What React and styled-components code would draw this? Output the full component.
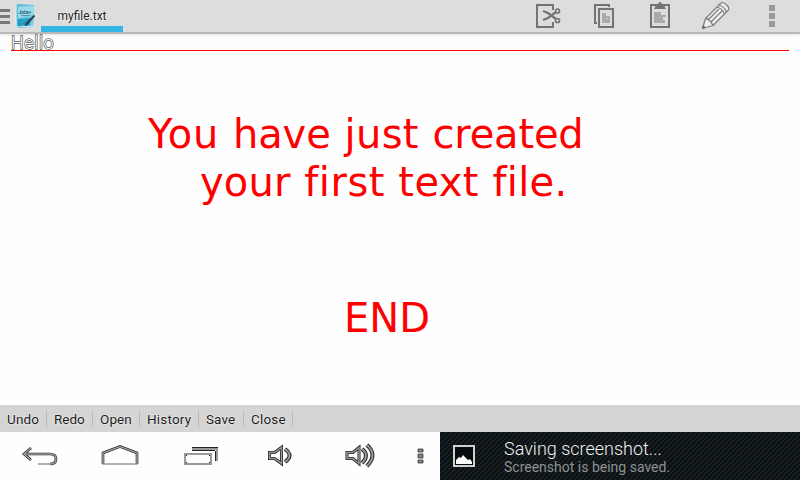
import React from "react";
import styled, { createGlobalStyle } from "styled-components";

const Global = createGlobalStyle`
  * { box-sizing: border-box; }
  body { margin: 0; background: #fefefe; overflow: hidden; }
`;

const Screen = styled.div`
  width: 800px;
  height: 480px;
  display: flex;
  flex-direction: column;
  background: #fefefe;
  font-family: Roboto, sans-serif;
`;

const ActionBar = styled.header`
  flex: none;
  height: 34px;
  display: flex;
  background: #dddddd;
  border-bottom: 2px solid #b9b9b9;
  box-shadow: 0 1px 2px #e4e4e4;
`;

const Icon = styled.svg`
  display: block;
  flex: none;
  width: ${(p) => p.$w}px;
  height: ${(p) => p.$h}px;
  margin-left: ${(p) => p.$gap || 0}px;
`;

const Tab = styled.div`
  width: 82px;
  height: 32px;
  margin-left: 4px;
  border-bottom: 6px solid #33b5e5;
  text-align: center;
  font-size: 12px;
  line-height: 32px;
  white-space: nowrap;
`;

const Outlined = styled.span`
  display: inline-block;
  color: ${(p) => p.$fill};
  font-weight: ${(p) => p.$weight || 400};
  letter-spacing: ${(p) => p.$track || 0}px;
  -webkit-text-stroke: ${(p) => p.$stroke}px ${(p) => p.$line};
  paint-order: stroke fill;
`;

const Actions = styled.div`
  display: flex;
  margin-left: auto;
`;

const Editor = styled.main`
  flex: 1;
  padding: 0 11px;
`;

const FirstLine = styled.div`
  height: 17px;
  border-bottom: 1px solid #f00;
  font-size: 18px;
  line-height: 18px;
`;

const Message = styled.p`
  margin: ${(p) => p.$top}px 0 0 ${(p) => p.$left}px;
  font: 40px/48px "DejaVu Sans", sans-serif;
  color: #f00;
  white-space: nowrap;
`;

const Word = styled.span`
  letter-spacing: ${(p) => p.$track}px;
  margin-left: ${(p) => p.$gap || 0}px;
`;

const CommandBar = styled.nav`
  flex: none;
  height: 27px;
  display: flex;
  align-items: center;
  background: #d5d5d5;
`;

const Command = styled.div`
  width: ${(p) => p.$w}px;
  height: 16px;
  padding-left: 7px;
  border-right: 1px solid #b9b9b9;
  font-size: 13.5px;
  line-height: 16px;
  white-space: nowrap;
`;

const SystemBar = styled.footer`
  flex: none;
  height: 48px;
  display: flex;
`;

const Notification = styled.section`
  width: 360px;
  display: flex;
  background: #0e1012 linear-gradient(135deg, #0e1012 0 12.5%, #173039 12.5% 25%, #0e1012 25% 62.5%, #173039 62.5% 75%, #0e1012 75%) 0 0 / 5px 5px;
`;

const NoticeText = styled.div`
  margin-left: 28px;
  padding-top: 7px;
  white-space: nowrap;
`;

const NoticeTitle = styled.div`
  font-size: 18px;
  font-weight: 300;
  line-height: 20px;
  color: #f0f0f0;
`;

const NoticeDetail = styled.div`
  font-size: 14px;
  line-height: 17px;
  color: #8f9192;
`;

const commands = [
  ["Undo", 47, 0.15],
  ["Redo", 46, 0],
  ["Open", 47, 0.1],
  ["History", 59, 0.2],
  ["Save", 45, 0.1],
  ["Close", 49, 0.2],
];

function AppLogo() {
  return (
    <Icon $w={37} $h={32} viewBox="0 0 37 32">
      <path d="M0 10.500h10M0 16.500h10M0 22.500h10" stroke="#787878" strokeWidth="3" />
      <path d="M16 5l2-1 16 1-1 22-15 1-2-3z" fill="#5cbbd3" />
      <path d="M18 6l16-1-1 21-15 1z" fill="#75cbe1" />
      <path d="M18 7l16-1-.4 8L18 18z" fill="#9bdceb" />
      <path d="M18 19l12-1v8l-12 1z" fill="#2699c2" />
      <path d="M16 5v21M17 27l16-1" stroke="#e9f6f8" />
      <path d="M20 23l7-4M19 26l11-1" stroke="#41aece" />
      <path d="M35 16l-8 9-2 1 1-3 8-8" fill="#244256" stroke="#284c63" strokeWidth=".7" />
      <text x="18.5" y="13.5" fontFamily="Roboto" fontSize="5" fontWeight="bold" fill="#235e7c">Jota+</text>
      <path d="M21 15.500h9" stroke="#5299b0" />
    </Icon>
  );
}

function ActionIcons() {
  return (
    <Actions>
      <Icon $w={28} $h={32} viewBox="534 0 28 32" fill="none" stroke="#747474">
        <path d="M553 10V5h-16v22h16v-5" strokeWidth="2" />
        <path d="M543 11l5 2 8 6M543 20l5-2 8-6" strokeWidth="2.200" />
        <circle cx="557.5" cy="11" r="2" strokeWidth="1.700" />
        <circle cx="557.5" cy="20.5" r="2" strokeWidth="1.700" />
      </Icon>
      <Icon $w={24} $h={32} $gap={31} viewBox="593 0 24 32" fill="none" stroke="#747474" strokeWidth="2">
        <path d="M597 23h-2V5h14v2M599 9h14v18h-14z" />
        <path d="M602 13h4v3h4v7h-8z" fill="#aaa" stroke="none" />
        <path d="M606 18.500h2" stroke="#ccc" strokeWidth="1" />
      </Icon>
      <Icon $w={24} $h={32} $gap={31} viewBox="648 0 24 32" fill="none" stroke="#747474" strokeWidth="2">
        <path d="M651 5h18v22h-18z" />
        <path d="M654 9l2-4h2c0-4 4-4 4 0h2l2 4z" fill="#747474" stroke="none" />
        <path d="M654 12h7v3h5v2h-3v3h2v3h-11z" fill="#aaa" stroke="none" />
      </Icon>
      <Icon $w={30} $h={32} $gap={29} viewBox="701 0 30 32" fill="#eee" stroke="#808080" strokeWidth="1.300" strokeLinejoin="round">
        <path d="M702.500 28.500l3-10 15-15q2-2 5 .5 5 4 2.500 6.500l-15 15z" />
        <path d="M705.500 18.500q5 1 7.500 7M717 7q6 2 7.500 7M719 5q6 2 7.500 7M708 20l11-11M711 22l11-11" fill="none" />
        <path d="M702 29l1.200-4 2.500 2.500z" fill="#666" stroke="none" />
      </Icon>
      <Icon $w={10} $h={32} $gap={36} viewBox="767 0 10 32" fill="#999">
        <path d="M769 5h6v6h-6zM769 13h6v6h-6zM769 21h6v6h-6z" />
      </Icon>
      <Icon $w={23} $h={32} viewBox="0 0 23 32" />
    </Actions>
  );
}

function NavigationIcons() {
  return (
    <Icon $w={440} $h={48} viewBox="0 432 440 48" fill="none">
      <g stroke="#222" strokeWidth="2.600">
        <path d="M31 448l-7 6 7 6M24 454h26" />
        <path d="M50 454q6 0 6 5t-6 5" />
        <path d="M103 464v-11l17-6.500 17 6.500v11" />
      </g>
      <g stroke="#999" strokeWidth="1.500">
        <path d="M31 448l-7 6 7 6M24 454h26q6 0 6 5t-6 5H38" />
        <path d="M103 464v-11l17-6.500 17 6.500v11z" />
      </g>
      <path d="M192 447.500h26M192 450.500h23" stroke="#222" />
      <path d="M192 449h25v12" stroke="#999" strokeWidth="2" />
      <path d="M215.500 451v10" stroke="#222" />
      <path d="M185 454h26v10h-26z" stroke="#999" strokeWidth="2" />
      <path d="M186 455h1v1h-1zM209 455h1v1h-1zM186 462h1v1h-1zM209 462h1v1h-1z" fill="#222" />
      <g stroke="#242424" strokeWidth="3">
        <path d="M269.500 452.500h5l7-5v16l-7-5h-5z" />
        <path d="M285 449q9 6.500 0 13" strokeWidth="4" />
        <path d="M347 452.500h6l6-5v16l-6-5h-6z" />
        <path d="M362 449q8 6 0 14M367 445q11 10 0 21" strokeWidth="4" />
      </g>
      <g stroke="#999" strokeWidth="1.500">
        <path d="M269.500 452.500h5l7-5v16l-7-5h-5z" />
        <path d="M285 449q9 6.500 0 13" strokeWidth="2" />
        <path d="M347 452.500h6l6-5v16l-6-5h-6z" />
        <path d="M362 449q8 6 0 14M367 445q11 10 0 21" strokeWidth="2" />
      </g>
      <path d="M418 449h5v3h-5zM418 454h5v4h-5zM418 460h5v3h-5z" fill="#888" stroke="#242424" strokeWidth=".7" />
    </Icon>
  );
}

export default function App() {
  return (
    <>
      <Global />
      <Screen>
        <ActionBar>
          <AppLogo />
          <Tab>
            <Outlined $fill="#222" $line="#f5f5f5" $stroke={1}>myfile.txt</Outlined>
          </Tab>
          <ActionIcons />
        </ActionBar>
        <Editor>
          <FirstLine>
            <Outlined $fill="#fff" $line="#555" $stroke={1.4} $weight={300} $track={0.6}>Hello</Outlined>
          </FirstLine>
          <Message $top={59} $left={137}>
            <Word $track={0.7}>You</Word> <Word $track={-0.1} $gap={1.2}>have</Word>{" "}
            <Word $track={0.3} $gap={1.2}>just</Word> <Word $track={-0.2} $gap={1}>created</Word>
          </Message>
          <Message $top={0} $left={189}>
            <Word $track={0.2}>your</Word> <Word $track={0.5} $gap={0.8}>first</Word>{" "}
            <Word $track={0.4} $gap={0.7}>text</Word> <Word $track={0.3} $gap={0.8}>file.</Word>
          </Message>
          <Message $top={88} $left={333}><Word $track={0}>END</Word></Message>
        </Editor>
        <CommandBar>
          {commands.map(([label, width, track]) => (
            <Command key={label} $w={width}>
              <Outlined $fill="#1c1c1c" $line="#eee" $stroke={1} $track={track}>{label}</Outlined>
            </Command>
          ))}
        </CommandBar>
        <SystemBar>
          <NavigationIcons />
          <Notification>
            <Icon $w={36} $h={48} viewBox="440 432 36 48">
              <path d="M454 446h20v20h-20z" fill="#090b0c" stroke="#d0d0d0" strokeWidth="2" />
              <path d="M456 464v-4l3-3 2 1 2-3 5 5 2-1 2 3v2z" fill="#fff" />
            </Icon>
            <NoticeText>
              <NoticeTitle>Saving screenshot...</NoticeTitle>
              <NoticeDetail>Screenshot is being saved.</NoticeDetail>
            </NoticeText>
          </Notification>
        </SystemBar>
      </Screen>
    </>
  );
}
